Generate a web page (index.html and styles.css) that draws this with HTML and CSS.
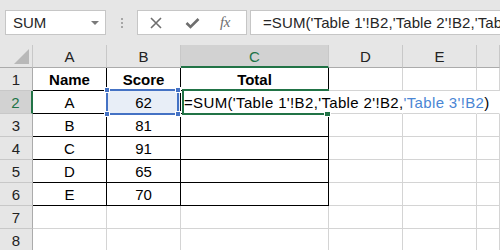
FILE: index.html
```html
<!DOCTYPE html>
<html>
<head>
<meta charset="utf-8">
<link rel="stylesheet" href="styles.css">
</head>
<body>
<div class="toolbar">
  <div class="namebox"><span class="name">SUM</span><span class="caret"></span></div>
  <div class="grip"><i></i><i></i><i></i></div>
  <div class="fxbox">
    <svg class="ic-x" width="12" height="12" viewBox="0 0 12 12"><path d="M1 1 L11 11 M11 1 L1 11" stroke="#6e6e6e" stroke-width="1.6" fill="none"/></svg>
    <svg class="ic-check" width="15" height="12" viewBox="0 0 15 12"><path d="M1.5 6 L5.5 10 L13.5 2" stroke="#6e6e6e" stroke-width="2.6" fill="none"/></svg>
    <span class="fx">fx</span>
  </div>
  <div class="formula">=SUM('Table 1'!B2,'Table 2'!B2,'Table 3'!B2)</div>
</div>
<div class="sheet">
  <div class="corner"><span class="tri"></span></div>
  <div class="ch">A</div>
  <div class="ch">B</div>
  <div class="ch ch-active">C</div>
  <div class="ch">D</div>
  <div class="ch">E</div>
  <div class="ch"></div>

  <div class="rh">1</div>
  <div class="c t b">Name</div>
  <div class="c t b">Score</div>
  <div class="c t b">Total</div>
  <div class="c"></div><div class="c"></div><div class="c"></div>

  <div class="rh rh-active">2</div>
  <div class="c t">A</div>
  <div class="c t sel">62</div>
  <div class="c t edit"><span class="ftext">=SUM('Table 1'!B2,'Table 2'!B2,<span class="ref3">'Table 3'!B2</span>)</span></div>
  <div class="c nr"></div><div class="c nr"></div><div class="c nr"></div>

  <div class="rh">3</div>
  <div class="c t">B</div>
  <div class="c t">81</div>
  <div class="c t"></div>
  <div class="c"></div><div class="c"></div><div class="c"></div>

  <div class="rh">4</div>
  <div class="c t">C</div>
  <div class="c t">91</div>
  <div class="c t"></div>
  <div class="c"></div><div class="c"></div><div class="c"></div>

  <div class="rh">5</div>
  <div class="c t">D</div>
  <div class="c t">65</div>
  <div class="c t"></div>
  <div class="c"></div><div class="c"></div><div class="c"></div>

  <div class="rh">6</div>
  <div class="c t">E</div>
  <div class="c t">70</div>
  <div class="c t"></div>
  <div class="c"></div><div class="c"></div><div class="c"></div>

  <div class="rh">7</div>
  <div class="c"></div><div class="c"></div><div class="c"></div>
  <div class="c"></div><div class="c"></div><div class="c"></div>

  <div class="rh">8</div>
  <div class="c"></div><div class="c"></div><div class="c"></div>
  <div class="c"></div><div class="c"></div><div class="c"></div>

  <div class="selbox">
    <span class="h h-tl"></span><span class="h h-tr"></span>
    <span class="h h-bl"></span><span class="h h-br"></span>
  </div>
  <div class="activebox"><span class="fill"></span></div>
</div>
</body>
</html>
```

FILE: styles.css
```css
html, body {
  margin: 0;
  padding: 0;
}
body {
  width: 500px;
  height: 250px;
  overflow: hidden;
  background: #e6e6e6;
  font-family: "Liberation Sans", Arial, sans-serif;
  color: #000;
}

/* ---------- formula toolbar ---------- */
.toolbar {
  display: flex;
  align-items: flex-start;
  height: 45px;
  padding: 10px 0 0 5px;
  box-sizing: border-box;
}
.namebox {
  width: 101px;
  height: 25px;
  box-sizing: border-box;
  border: 1px solid #c6c6c6;
  background: #fff;
  display: flex;
  align-items: center;
  justify-content: space-between;
  padding: 0 6px 0 7px;
}
.name {
  font-size: 15px;
  line-height: 23px;
  color: #262626;
}
.caret {
  width: 0;
  height: 0;
  border-left: 4px solid transparent;
  border-right: 4px solid transparent;
  border-top: 4px solid #7a7a7a;
  margin-top: 1px;
}
.grip {
  width: 31px;
  height: 25px;
  display: flex;
  flex-direction: column;
  align-items: center;
  justify-content: center;
  gap: 2px;
}
.grip i {
  display: block;
  width: 2px;
  height: 2px;
  background: #a6a6a6;
}
.fxbox {
  width: 110px;
  height: 25px;
  box-sizing: border-box;
  border: 1px solid #c6c6c6;
  background: #fff;
  display: flex;
  align-items: center;
  padding-left: 12px;
}
.ic-x {
  margin-right: 23px;
}
.ic-check {
  margin-right: 20px;
}
.fx {
  font-family: "Liberation Serif", "Times New Roman", serif;
  font-style: italic;
  font-size: 15px;
  color: #6e6e6e;
  letter-spacing: -0.5px;
}
.formula {
  flex: 1;
  margin-left: 3px;
  height: 25px;
  box-sizing: border-box;
  border: 1px solid #c6c6c6;
  border-right: none;
  background: #fff;
  font-size: 15px;
  line-height: 23px;
  color: #262626;
  padding-left: 12px;
  white-space: nowrap;
  overflow: hidden;
  letter-spacing: 0.1px;
}

/* ---------- sheet grid ---------- */
.sheet {
  position: relative;
  display: grid;
  grid-template-columns: 33px 74px 74px 148px 74px 74px 1fr;
  grid-auto-rows: 23px;
  background: #fff;
  font-size: 15px;
}
.corner {
  position: relative;
  background: #e6e6e6;
  border-right: 1px solid #c8c8c8;
  border-bottom: 1px solid #ababab;
  box-sizing: border-box;
}
.tri {
  position: absolute;
  right: 3px;
  bottom: 3px;
  width: 0;
  height: 0;
  border-left: 15px solid transparent;
  border-bottom: 15px solid #b8b8b8;
}
.ch {
  background: #e6e6e6;
  border-right: 1px solid #c8c8c8;
  border-bottom: 1px solid #ababab;
  box-sizing: border-box;
  text-align: center;
  line-height: 22px;
  padding-top: 1px;
  color: #222;
}
.ch-active {
  background: #d2d2d2;
  color: #217346;
  border-bottom: 2px solid #217346;
}
.rh {
  background: #e6e6e6;
  border-right: 1px solid #ababab;
  border-bottom: 1px solid #c8c8c8;
  box-sizing: border-box;
  text-align: center;
  line-height: 22px;
  padding-top: 1px;
  color: #222;
}
.rh-active {
  background: #d2d2d2;
  color: #217346;
  border-right: 2px solid #217346;
}
.c {
  box-sizing: border-box;
  border-right: 1px solid #d4d4d4;
  border-bottom: 1px solid #d4d4d4;
  text-align: center;
  line-height: 22px;
  padding-top: 1px;
  white-space: nowrap;
}
.c.t {
  border-right-color: #000;
  border-bottom-color: #000;
}
.c.b {
  font-weight: bold;
}
.c.sel {
  background: #e8eef7;
}
.c.nr {
  border-right-color: transparent;
}
.c.edit {
  border-right-color: transparent;
  text-align: left;
  position: relative;
  z-index: 2;
  overflow: visible;
}
.ftext {
  display: inline-block;
  padding-left: 3px;
  letter-spacing: 0.35px;
}
.ref3 {
  color: #4a86d4;
}

/* ---------- selection overlays ---------- */
.selbox {
  position: absolute;
  left: 106px;
  top: 44px;
  width: 73px;
  height: 26px;
  box-sizing: border-box;
  border: 2px solid #4472c4;
  z-index: 3;
}
.h {
  position: absolute;
  width: 6px;
  height: 6px;
  box-sizing: border-box;
  background: #4472c4;
  border: 1px solid #fff;
}
.h-tl { left: -4px; top: -4px; }
.h-tr { right: -4px; top: -4px; }
.h-bl { left: -4px; bottom: -4px; }
.h-br { right: -4px; bottom: -4px; }
.activebox {
  position: absolute;
  left: 182px;
  top: 44px;
  width: 147px;
  height: 26px;
  box-sizing: border-box;
  border-top: 2px solid #217346;
  border-bottom: 2px solid #217346;
  border-left: 2px solid #217346;
  z-index: 3;
}
.fill {
  position: absolute;
  right: -2px;
  bottom: -4px;
  width: 7px;
  height: 6px;
  box-sizing: border-box;
  background: #217346;
  border: 1px solid #fff;
}
```
